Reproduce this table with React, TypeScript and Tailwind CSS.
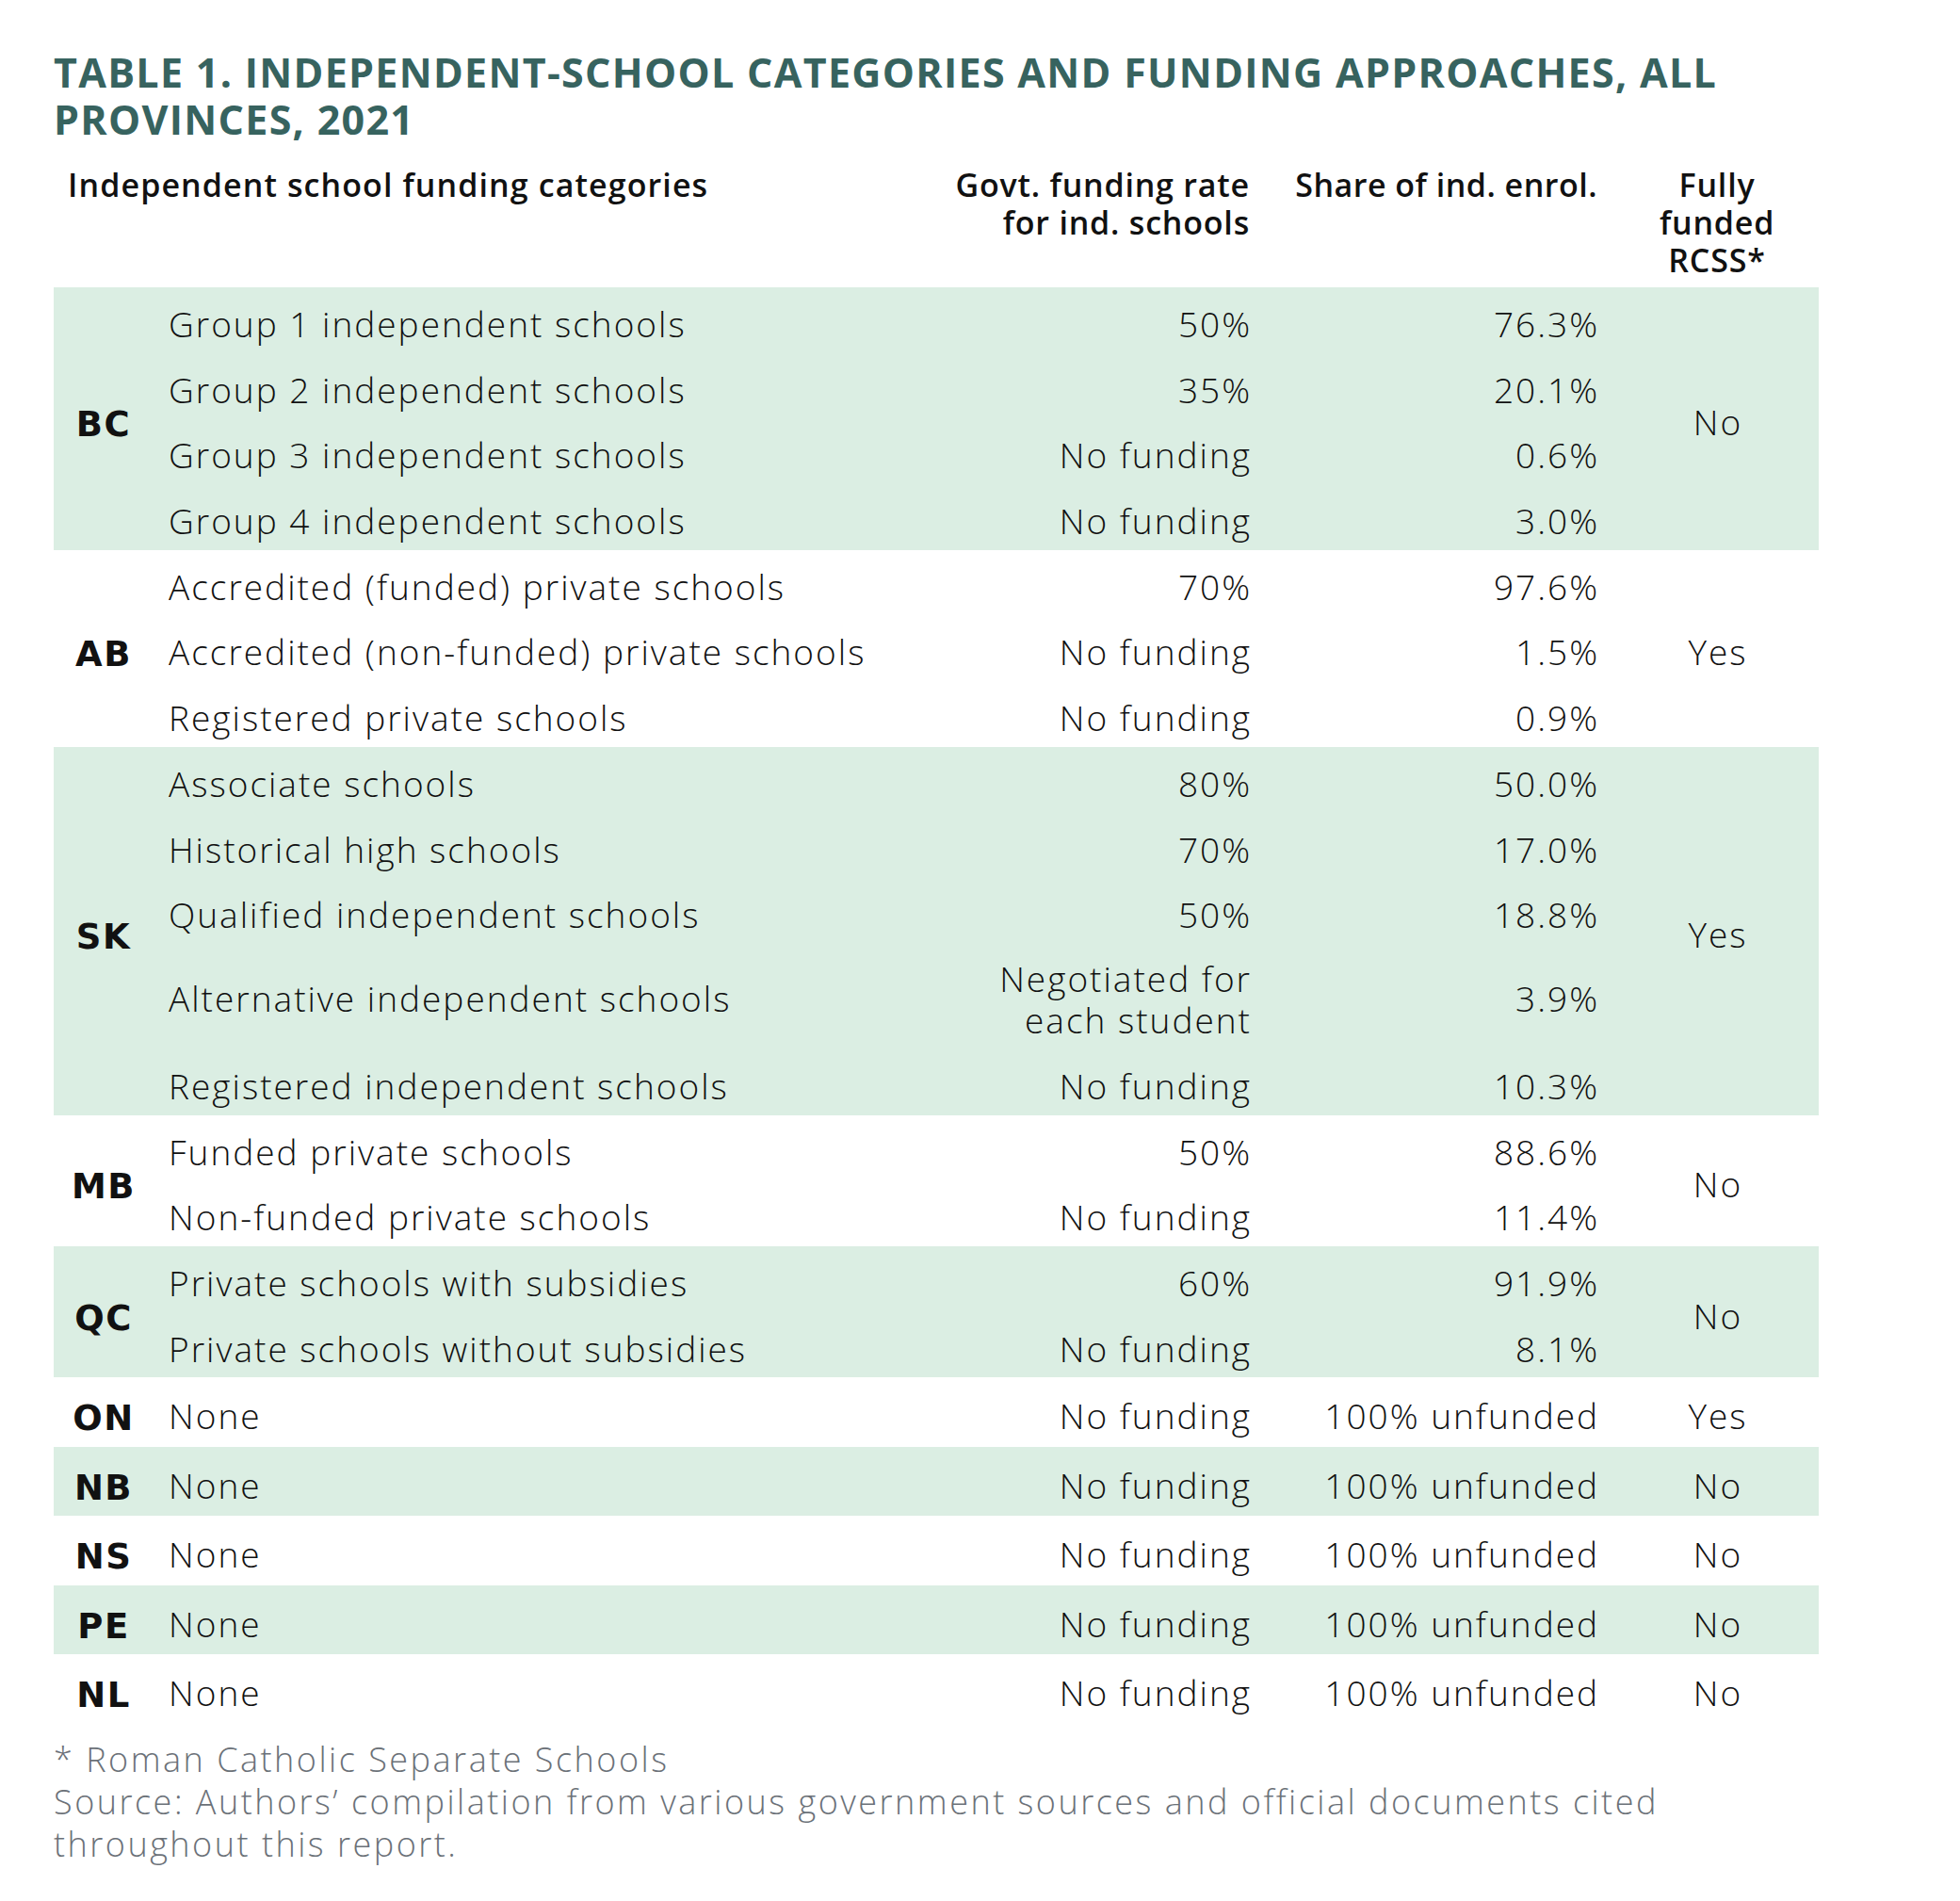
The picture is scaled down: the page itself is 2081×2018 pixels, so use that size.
type Row = { name: string; rate: string; share: string; tall?: boolean };
type Block = { code: string; rows: Row[]; rcss: string; shaded: boolean };

const BLOCKS: Block[] = [
  {
    code: 'BC',
    rcss: 'No',
    shaded: true,
    rows: [
      { name: 'Group 1 independent schools', rate: '50%', share: '76.3%' },
      { name: 'Group 2 independent schools', rate: '35%', share: '20.1%' },
      { name: 'Group 3 independent schools', rate: 'No funding', share: '0.6%' },
      { name: 'Group 4 independent schools', rate: 'No funding', share: '3.0%' },
    ],
  },
  {
    code: 'AB',
    rcss: 'Yes',
    shaded: false,
    rows: [
      { name: 'Accredited (funded) private schools', rate: '70%', share: '97.6%' },
      { name: 'Accredited (non-funded) private schools', rate: 'No funding', share: '1.5%' },
      { name: 'Registered private schools', rate: 'No funding', share: '0.9%' },
    ],
  },
  {
    code: 'SK',
    rcss: 'Yes',
    shaded: true,
    rows: [
      { name: 'Associate schools', rate: '80%', share: '50.0%' },
      { name: 'Historical high schools', rate: '70%', share: '17.0%' },
      { name: 'Qualified independent schools', rate: '50%', share: '18.8%' },
      { name: 'Alternative independent schools', rate: 'Negotiated for|each student', share: '3.9%', tall: true },
      { name: 'Registered independent schools', rate: 'No funding', share: '10.3%' },
    ],
  },
  {
    code: 'MB',
    rcss: 'No',
    shaded: false,
    rows: [
      { name: 'Funded private schools', rate: '50%', share: '88.6%' },
      { name: 'Non-funded private schools', rate: 'No funding', share: '11.4%' },
    ],
  },
  {
    code: 'QC',
    rcss: 'No',
    shaded: true,
    rows: [
      { name: 'Private schools with subsidies', rate: '60%', share: '91.9%' },
      { name: 'Private schools without subsidies', rate: 'No funding', share: '8.1%' },
    ],
  },
  { code: 'ON', rcss: 'Yes', shaded: false, rows: [{ name: 'None', rate: 'No funding', share: '100% unfunded' }] },
  { code: 'NB', rcss: 'No', shaded: true, rows: [{ name: 'None', rate: 'No funding', share: '100% unfunded' }] },
  { code: 'NS', rcss: 'No', shaded: false, rows: [{ name: 'None', rate: 'No funding', share: '100% unfunded' }] },
  { code: 'PE', rcss: 'No', shaded: true, rows: [{ name: 'None', rate: 'No funding', share: '100% unfunded' }] },
  { code: 'NL', rcss: 'No', shaded: false, rows: [{ name: 'None', rate: 'No funding', share: '100% unfunded' }] },
];

function TableRow({ row, single }: { row: Row; single: boolean }) {
  if (row.tall) {
    const [a, b] = row.rate.split('|');
    return (
      <div className="flex h-[112px]">
        <div className="flex flex-1 items-center pt-[4px]">{row.name}</div>
        <div className="w-[330px] whitespace-nowrap pt-[15px] text-right">
          {a}
          <br />
          {b}
        </div>
        <div className="flex w-[369px] items-center justify-end pt-[4px]">{row.share}</div>
      </div>
    );
  }
  return (
    <div className={single ? 'flex h-[73.5px] pt-[19px]' : 'flex h-[69.7px] pt-[17px]'}>
      <div className="flex-1 whitespace-nowrap">{row.name}</div>
      <div className="w-[330px] whitespace-nowrap text-right">{row.rate}</div>
      <div className="w-[369px] whitespace-nowrap text-right">{row.share}</div>
    </div>
  );
}

function ProvinceBlock({ block }: { block: Block }) {
  const single = block.rows.length === 1;
  return (
    <div className={block.shaded ? 'flex bg-[#dbeee3]' : 'flex bg-white'}>
      <div className="flex w-[122px] items-center justify-center pl-[2px] pr-[18px] pt-[14px] font-['DejaVu_Sans',sans-serif] text-[37px] font-bold tracking-[1.5px]">
        {block.code}
      </div>
      <div className="-mr-[2px] flex flex-1 flex-col">
        {block.rows.map((r) => (
          <TableRow key={r.name + r.share} row={r} single={single} />
        ))}
      </div>
      <div className="flex w-[235px] items-center justify-center pl-[21px] pt-[8px]">{block.rcss}</div>
    </div>
  );
}

export default function App() {
  return (
    <div className="min-h-[2018px] w-[2081px] bg-white pl-[57px] pt-[52px] font-['Open_Sans',sans-serif] text-[#111]">
      <h1 className="text-[43px] font-bold leading-[50px] tracking-[1.3px] text-[#37635f]">
        TABLE 1. INDEPENDENT-SCHOOL CATEGORIES AND FUNDING APPROACHES, ALL
        <br />
        PROVINCES, 2021
      </h1>

      <div className="mt-[24px] w-[1874px]">
        <div className="flex pb-[9px] text-[34px] font-semibold leading-[40px] tracking-[0.8px]">
          <div className="w-[940px] pl-[15px] tracking-[1.1px]">Independent school funding categories</div>
          <div className="w-[330px] whitespace-nowrap text-right">
            Govt. funding rate
            <br />
            for ind. schools
          </div>
          <div className="w-[369px] whitespace-nowrap text-right tracking-[0.5px]">Share of ind. enrol.</div>
          <div className="w-[235px] pl-[19px] text-center">
            Fully
            <br />
            funded
            <br />
            RCSS*
          </div>
        </div>

        <div className="text-[37px] font-light leading-[44px] tracking-[2px]">
          {BLOCKS.map((b) => (
            <ProvinceBlock key={b.code} block={b} />
          ))}
        </div>
      </div>

      <div className="mt-[15px] text-[36px] font-light leading-[45px] tracking-[2.5px] text-[#6b7178]">
        <p>* Roman Catholic Separate Schools</p>
        <p className="whitespace-nowrap">
          Source: Authors’ compilation from various government sources and official documents cited
          <br />
          throughout this report.
        </p>
      </div>
    </div>
  );
}
